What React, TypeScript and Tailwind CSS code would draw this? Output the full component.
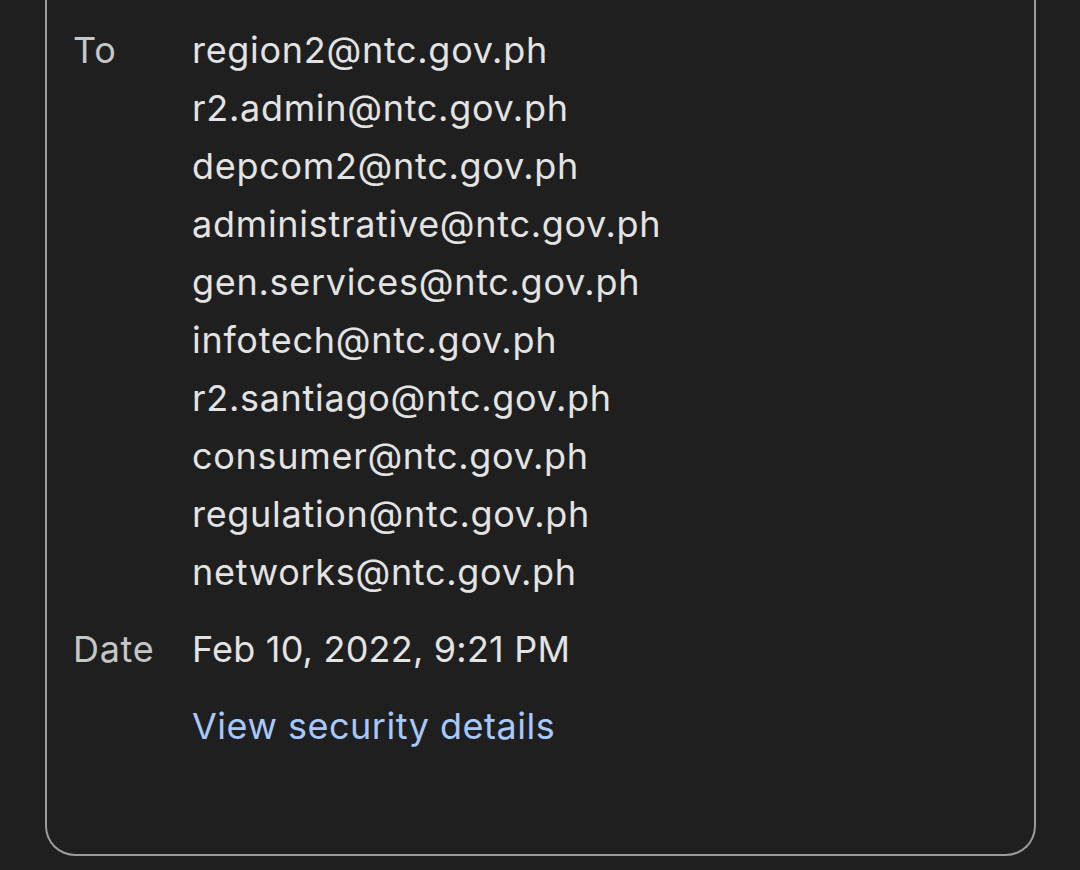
export default function App() {
    const recipients = [
        "region2@ntc.gov.ph",
        "r2.admin@ntc.gov.ph",
        "depcom2@ntc.gov.ph",
        "administrative@ntc.gov.ph",
        "gen.services@ntc.gov.ph",
        "infotech@ntc.gov.ph",
        "r2.santiago@ntc.gov.ph",
        "consumer@ntc.gov.ph",
        "regulation@ntc.gov.ph",
        "networks@ntc.gov.ph",
    ];
    return (
        <div className="h-[870px] overflow-hidden bg-[#1f1f1f] pl-[45px] pr-[44px] font-['Inter',sans-serif] text-[36px] tracking-[0.7px] leading-[58px]">
            <div className="border-x-2 border-b-2 border-[#9b9b9b] rounded-b-[30px] pl-[26px] pt-[21px] pb-[99px]">
                <div className="flex">
                    <div className="w-[119px] text-[#c4c7c5]">To</div>
                    <div className="flex flex-col text-[#e3e3e3]">
                        {recipients.map((r, i) => (
                            <div key={i}>{r}</div>
                        ))}
                    </div>
                </div>
                <div className="flex mt-[19px]">
                    <div className="w-[119px] text-[#c4c7c5]">Date</div>
                    <div className="text-[#e3e3e3] tracking-[0.2px]">Feb 10, 2022, 9:21 PM</div>
                </div>
                <div className="flex mt-[19px]">
                    <div className="w-[119px]"></div>
                    <div className="text-[#a8c7fa] tracking-[0.5px]">View security details</div>
                </div>
            </div>
        </div>
    );
}
